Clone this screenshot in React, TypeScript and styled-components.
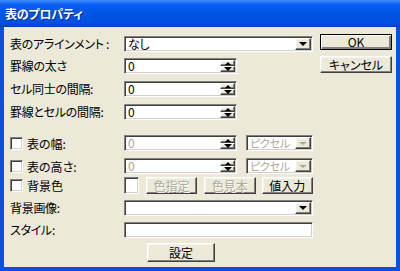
import React from "react";
import styled, { createGlobalStyle, css } from "styled-components";

const GlobalStyle = createGlobalStyle`
  html, body {
    margin: 0;
    padding: 0;
    width: 400px;
    height: 271px;
    overflow: hidden;
    background: #ffffff;
  }
  * {
    box-sizing: border-box;
  }
`;

const font = `"Noto Sans CJK JP", "Liberation Sans", sans-serif`;

const Window = styled.div`
  width: 400px;
  height: 271px;
  display: flex;
  flex-direction: column;
  background: #0a4fe0;
  font-family: ${font};
  font-feature-settings: "palt";
  font-size: 12px;
  color: #000;
`;

const TitleBar = styled.div`
  height: 27px;
  display: flex;
  align-items: center;
  padding: 0 0 1px 5px;
  background: linear-gradient(180deg, #3a8cff 0%, #0a5cf2 18%, #0055e5 50%, #0050df 85%, #0040c8 100%);
  color: #ffffff;
  font-weight: bold;
  font-size: 12px;
  letter-spacing: -0.2px;
  text-shadow: 1px 1px 0 #0a2a8a;
`;

const Frame = styled.div`
  flex: 1;
  margin: 0 4px 4px;
  background: #ece9d8;
  display: flex;
  padding-left: 6px;
`;

const Form = styled.div`
  width: 303px;
  display: flex;
  flex-direction: column;
`;

const Row = styled.div<{ $gap: number; $h?: number }>`
  display: flex;
  align-items: center;
  height: ${(p) => p.$h ?? 16}px;
  margin-top: ${(p) => p.$gap}px;
`;

const Label = styled.div`
  width: 114px;
  flex-shrink: 0;
  white-space: nowrap;
  line-height: 16px;
  letter-spacing: -0.3px;
`;

const CheckLabel = styled.label`
  width: 114px;
  flex-shrink: 0;
  display: flex;
  align-items: center;
  gap: 4px;
  white-space: nowrap;
`;

const sunken = css`
  background: #ffffff;
  border-top: 1px solid #808080;
  border-left: 1px solid #808080;
  border-right: 1px solid #ffffff;
  border-bottom: 1px solid #ffffff;
  box-shadow: inset 1px 1px 0 #404040, inset -1px -1px 0 #d4d0c8;
`;

const CheckBox = styled.span`
  ${sunken};
  width: 13px;
  height: 13px;
`;

const Field = styled.div<{ $w: number; $disabled?: boolean }>`
  ${sunken};
  width: ${(p) => p.$w}px;
  height: 16px;
  display: flex;
  align-items: stretch;
  padding: 1px 1px 1px 3px;
  color: ${(p) => (p.$disabled ? "#aca899" : "#000")};
`;

const FieldText = styled.span<{ $small?: boolean }>`
  flex: 1;
  display: flex;
  align-items: center;
  font-size: ${(p) => (p.$small ? 11 : 12)}px;
  line-height: 12px;
  white-space: nowrap;
  letter-spacing: -0.3px;
`;

const raised = css`
  background: #ece9d8;
  border-top: 1px solid #ffffff;
  border-left: 1px solid #ffffff;
  border-right: 1px solid #404040;
  border-bottom: 1px solid #404040;
  box-shadow: inset -1px -1px 0 #808080, inset 1px 1px 0 #f4f3ee;
`;

const DropButton = styled.span`
  ${raised};
  width: 16px;
  display: flex;
  align-items: center;
  justify-content: center;
`;

const SpinButton = styled.span`
  width: 15px;
  display: flex;
  flex-direction: column;
`;

const SpinHalf = styled.span`
  ${raised};
  flex: 1;
  display: flex;
  align-items: center;
  justify-content: center;
`;

const Arrow = styled.span<{ $up?: boolean; $disabled?: boolean }>`
  width: 0;
  height: 0;
  border-left: ${(p) => (p.$up ? 3 : 4)}px solid transparent;
  border-right: ${(p) => (p.$up ? 3 : 4)}px solid transparent;
  ${(p) =>
    p.$up
      ? `border-bottom: 3px solid ${p.$disabled ? "#aca899" : "#000"};`
      : `border-top: ${p.$disabled ? 3 : 4}px solid ${p.$disabled ? "#aca899" : "#000"};`}
`;

const Swatch = styled.span`
  ${sunken};
  width: 16px;
  height: 17px;
  margin-right: 7px;
`;

const Button = styled.button<{ $w: number; $h?: number; $disabled?: boolean; $default?: boolean }>`
  ${raised};
  width: ${(p) => p.$w}px;
  height: ${(p) => p.$h ?? 17}px;
  padding: 0;
  margin: 0;
  font-family: ${font};
  font-feature-settings: "palt";
  font-size: 12px;
  line-height: 12px;
  color: ${(p) => (p.$disabled ? "#aca899" : "#000")};
  text-shadow: ${(p) => (p.$disabled ? "1px 1px 0 #ffffff" : "none")};
  ${(p) =>
    p.$default &&
    css`
      outline: 1px solid #000;
      outline-offset: -1px;
      box-shadow: inset 1px 1px 0 #ffffff, inset -1px -1px 0 #808080, inset -2px -2px 0 #808080;
    `}
`;

const Spacer = styled.span<{ $w: number }>`
  width: ${(p) => p.$w}px;
  flex-shrink: 0;
`;

const Side = styled.div`
  margin-left: 7px;
  padding-top: 7px;
  display: flex;
  flex-direction: column;
  gap: 6px;
`;

const SetRow = styled.div`
  display: flex;
  margin-top: 5px;
  padding-left: 137px;
`;

function Select({ w, text, disabled, small }: { w: number; text: string; disabled?: boolean; small?: boolean }) {
  return (
    <Field $w={w} $disabled={disabled}>
      <FieldText $small={small}>{text}</FieldText>
      <DropButton>
        <Arrow $disabled={disabled} />
      </DropButton>
    </Field>
  );
}

function Spin({ disabled }: { disabled?: boolean }) {
  return (
    <Field $w={113} $disabled={disabled}>
      <FieldText>0</FieldText>
      <SpinButton>
        <SpinHalf>
          <Arrow $up />
        </SpinHalf>
        <SpinHalf>
          <Arrow />
        </SpinHalf>
      </SpinButton>
    </Field>
  );
}

export default function App() {
  return (
    <>
      <GlobalStyle />
      <Window>
        <TitleBar>表のプロパティ</TitleBar>
        <Frame>
          <Form>
            <Row $gap={9}>
              <Label>表のアラインメント :</Label>
              <Select w={189} text="なし" />
            </Row>
            <Row $gap={6}>
              <Label>罫線の太さ</Label>
              <Spin />
            </Row>
            <Row $gap={7}>
              <Label>セル同士の間隔:</Label>
              <Spin />
            </Row>
            <Row $gap={7}>
              <Label>罫線とセルの間隔:</Label>
              <Spin />
            </Row>
            <Row $gap={15}>
              <CheckLabel>
                <CheckBox />
                表の幅:
              </CheckLabel>
              <Spin disabled />
              <Spacer $w={9} />
              <Select w={67} text="ピクセル" disabled small />
            </Row>
            <Row $gap={7}>
              <CheckLabel>
                <CheckBox />
                表の高さ:
              </CheckLabel>
              <Spin disabled />
              <Spacer $w={9} />
              <Select w={67} text="ピクセル" disabled small />
            </Row>
            <Row $gap={3} $h={17}>
              <CheckLabel>
                <CheckBox />
                背景色
              </CheckLabel>
              <Swatch />
              <Button $w={53} $disabled>
                色指定
              </Button>
              <Spacer $w={7} />
              <Button $w={55} $disabled>
                色見本
              </Button>
              <Spacer $w={6} />
              <Button $w={54}>値入力</Button>
            </Row>
            <Row $gap={6}>
              <Label>背景画像:</Label>
              <Select w={189} text="" />
            </Row>
            <Row $gap={6}>
              <Label>スタイル:</Label>
              <Field $w={189}>
                <FieldText />
              </Field>
            </Row>
            <SetRow>
              <Button $w={68} $h={19}>
                設定
              </Button>
            </SetRow>
          </Form>
          <Side>
            <Button $w={72} $h={16} $default>
              OK
            </Button>
            <Button $w={72} $h={17}>
              キャンセル
            </Button>
          </Side>
        </Frame>
      </Window>
    </>
  );
}
